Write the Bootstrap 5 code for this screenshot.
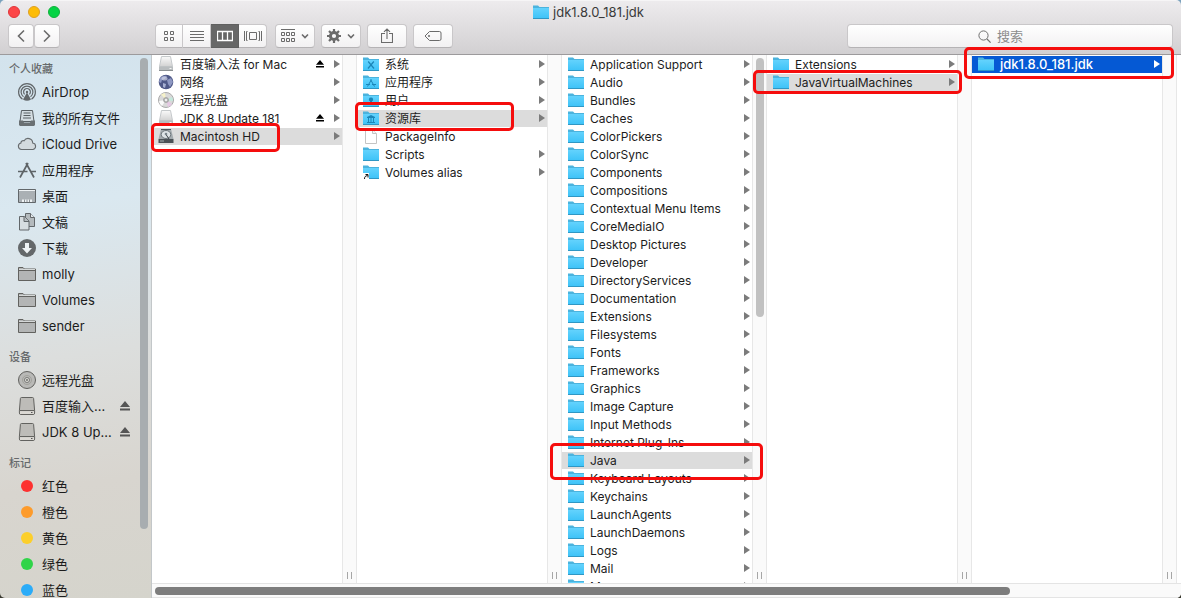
<!DOCTYPE html>
<html lang="zh-CN">
<head>
<meta charset="utf-8">
<meta name="viewport" content="width=device-width, initial-scale=1">
<title>jdk1.8.0_181.jdk</title>
<link href="https://cdn.jsdelivr.net/npm/bootstrap@5.3.0/dist/css/bootstrap.min.css" rel="stylesheet">
<style>
body{font-family:Inter,"Noto Sans CJK SC",sans-serif;font-size:13px;line-height:17px;color:#1c1c1c;background:linear-gradient(#7ba2bd,#5b6262 80%,#3a3a30)}
a{color:inherit;text-decoration:none}
.finder{border-radius:5px}
.chrome{background:linear-gradient(#edebed,#d2d0d2);border-bottom:1px solid #9c9a9c;border-top:1px solid #f6f5f6}
.titlerow{display:grid;grid-template-columns:1fr auto 1fr;height:22px;padding:0 12px 0 8px}
.light{width:12px;height:12px;border-radius:50%;border:1px solid #e0363a;background:#fc4648;padding:0}
.light.min{background:#fdbc05;border-color:#dfa023}
.light.max{background:#05d344;border-color:#10b13c}
.wtitle{color:#3a3a3a}
.tools{height:31px;padding:1px 8px 0 8px}
.tb{height:24px;border:1px solid #c9c7c9;border-bottom-color:#b5b3b5;border-radius:4px;background:linear-gradient(#fff,#f2f1f2);color:#6b6b6b;padding:0;display:flex;align-items:center;justify-content:center}
.tb.nav-b{width:26px}
.tb.wide{width:40px}
.views .tb{width:28px;border-radius:0;border-left-width:0}
.views .tb:first-child{border-left-width:1px;border-radius:4px 0 0 4px}
.views .tb:last-child{border-radius:0 4px 4px 0}
.views .tb.on{background:#676767;border-color:#606060;color:#fff}
.views{margin-left:95px}
.groupings{gap:6px}
.tb svg,.find svg{fill:none;stroke:currentColor}
.find{width:326px}
.find input{height:24px;width:100%;border:1px solid #c9c7c9;border-bottom-color:#b5b3b5;border-radius:4px;background:linear-gradient(#fff,#f2f1f2);text-align:center;outline:0;padding:0}
.find input::placeholder{color:#8c8c8c;opacity:1}
.find input::-webkit-search-cancel-button{display:none}
.find svg{position:absolute;left:calc(50% - 32px);top:6px;color:#6f6f6f}
.side{width:152px;flex:none;border-right:1px solid #c3c7c9;background:linear-gradient(172deg,#d3e3ed,#dae8f0 28%,#dcdedd 55%,#d8d5cf 78%,#d5d4cc);padding-top:4px}
.side h2{font-size:11px;line-height:20px;font-weight:500;color:#66696b;margin:0;padding-left:9px}
.side ul+h2{margin-top:8px}
.side a{display:flex;align-items:center;height:26px;padding-left:17px;gap:5px;width:136px}
.side a svg{width:20px;height:20px;flex:none}
.side a .ej{width:10px;height:10px;margin-left:auto;margin-right:6px;color:#555}
.dot{width:20px;display:flex;justify-content:center;flex:none}
.dot i{width:12px;height:12px;border-radius:50%}
.bar{position:absolute;width:8px;border-radius:4px}
.side .bar{left:140px;top:3px;height:471px;background:#a8adb0}
.pane{width:190px;flex:none;padding-top:1px;font-size:12px}
.pane li{height:18px;position:relative}
.pane a{display:flex;align-items:center;height:17px;padding:0 2px 0 6px;gap:6px;color:#1c1c1c}
.pane a>svg{width:16px;height:16px;flex:none;margin-bottom:1px}
.pane a>.ej{width:8px;height:8px;margin-left:auto;color:#000;margin-right:4px}
.pane a.dir::after{content:"";margin-left:auto;margin-bottom:1px;border-left:6px solid #7b7b7b;border-top:4px solid transparent;border-bottom:4px solid transparent}
.pane a.has-ej::after{margin-left:0}
.pane a.picked{background:#dcdcdc}
.pane a.active-pick{background:#0559d4;color:#fff;font-weight:500;font-size:13px}
.pane a.active-pick::after{border-left-color:#fff}
.gutter{width:15px;flex:none;background:#fafafa;border:solid #e7e7e7;border-width:0 1px;position:relative}
.grip{position:absolute;left:4px;bottom:4px;width:5px;height:7px;border:solid #a6a6a6;border-width:0 1px}
.gutter .bar{left:3px;top:3px;height:259px;background:#c1c1c1}
.callout{position:absolute;border:3px solid #f50d0d;border-radius:5px;z-index:5;pointer-events:none}
.c-disk{left:-1px;top:-5px;width:129px;height:29px}
.c-lib{left:-2px;top:-8px;width:159px;height:29px}
.c-java{left:-12px;top:-9px;width:213px;height:37px}
.c-jvm{left:-14px;top:-4px;width:209px;height:24px}
.c-jdk{left:-8px;top:-9px;width:210px;height:32px}
.hbar{height:15px;background:#fafafa;border:solid #e4e4e4;border-width:1px 0;position:relative;z-index:4;padding:3px}
.hbar div{width:83.6%;height:8px;border-radius:4px;background:#7d7d7d}
</style>
</head>
<body class="vh-100 overflow-hidden">
<svg width="0" height="0" class="position-absolute" aria-hidden="true">
<defs>
<linearGradient id="gf" x1="0" y1="0" x2="0" y2="1"><stop offset="0" stop-color="#63d2fd"/><stop offset="1" stop-color="#3fc3f8"/></linearGradient>
<linearGradient id="gd" x1="0" y1="0" x2="0" y2="1"><stop offset="0" stop-color="#fafafa"/><stop offset="1" stop-color="#d2d2d2"/></linearGradient>
</defs>
<symbol id="folder" viewBox="0 0 16 16"><path d="M0 1.500h5l1.500 1.500H16v11.500H0z" fill="#4bb3dd"/><path d="M0 4h16v10H0z" fill="url(#gf)"/><path d="M0 14h16v1H0z" fill="#2f97c4"/></symbol>
<symbol id="f-sys" viewBox="0 0 16 16"><use href="#folder"/><path d="M5.200 5.500 11 12.500M10.800 5.500 5 12.500" stroke="#1b86b8" stroke-width="1.200"/></symbol>
<symbol id="f-app" viewBox="0 0 16 16"><use href="#folder"/><path d="M4.500 12.500 8.500 5.500M7.500 5.500l4 7M3 10.500h4M9 10.500h4" stroke="#1b86b8" stroke-width="1"/></symbol>
<symbol id="f-user" viewBox="0 0 16 16"><use href="#folder"/><path d="M8 5.500a2 2 0 0 1 1 3.800L8.800 12.500H7.200L7 9.300a2 2 0 0 1 1-3.800z" fill="#1b86b8"/></symbol>
<symbol id="f-lib" viewBox="0 0 16 16"><use href="#folder"/><path d="M4 8V7l4-2 4 2v1zM4 12h8v1H4zM5 8h1v4H5zM7.500 8h1v4h-1zM10 8h1v4h-1z" fill="#1b86b8"/></symbol>
<symbol id="f-alias" viewBox="0 0 16 16"><use href="#folder"/><path d="M0 9h6v7H0z" fill="#fff"/><path d="M1.500 15c0-2 .5-3 3-3.500M2.500 10.500h2.500v3" stroke="#111" fill="none"/></symbol>
<symbol id="page" viewBox="0 0 16 16"><path d="M2.500 1.500h7l4 4v10h-11z" fill="#fff" stroke="#c4c4c4"/><path d="M9.500 1.500v4h4" fill="#f2f2f2" stroke="#c4c4c4"/></symbol>
<symbol id="disk" viewBox="0 0 16 16"><path d="M3.500.5h9L14.500 10.500h-13z" fill="url(#gd)" stroke="#c5c9cb"/><path d="M1 10.500h14V15H1z" fill="#b9bdbf"/><path d="M1 14.500h14" stroke="#8b9093"/><path d="M11.500 12.500h2" stroke="#f4f4f4"/></symbol>
<symbol id="hd" viewBox="0 0 16 16"><path d="M3 1h10l2.500 10H.5z" fill="#a3aaae"/><ellipse cx="8" cy="6.500" rx="4.800" ry="4" fill="#dde3e6" stroke="#6d767b"/><path d="M8 6.500 11 11" stroke="#394247"/><circle cx="8" cy="6" r="1.300" fill="#7b868c"/><path d="M.5 11h15v4H.5z" fill="#4b5257"/><path d="M3 1.500h10" stroke="#4e565b"/><path d="M2 13h4" stroke="#a7b0b5"/></symbol>
<symbol id="globe" viewBox="0 0 16 16"><circle cx="8" cy="8" r="7.300" fill="#4f5988"/><path d="M2 4q3-3 7-2l-2 3-3 1-1 3-2-1zM9 6l4-2 2 4-3 5-2-3z" fill="#8e98c2"/><path d="M5 9l3 1-1 4-2-1z" fill="#a8b1d3"/><ellipse cx="6.500" cy="4.500" rx="3" ry="2" fill="#d5d9ea" opacity=".65"/></symbol>
<symbol id="cd" viewBox="0 0 16 16"><circle cx="8" cy="8" r="7.500" fill="#d9d9d9" stroke="#a9a9a9"/><path d="M8 8 3 2.500A7 7 0 0 1 7 1z" fill="#f6f2c9"/><path d="M8 8 14 5a7 7 0 0 1 1 4z" fill="#c3e9dc"/><path d="M8 8l2 7a7 7 0 0 0 4-3z" fill="#e5c8e3"/><path d="M8 8 1 9a7 7 0 0 0 3 5z" fill="#fafafa"/><circle cx="8" cy="8" r="2.500" fill="#bbb" stroke="#8e8e8e" stroke-width=".6"/><circle cx="8" cy="8" r="1" fill="#fff"/></symbol>
<symbol id="eject" viewBox="0 0 10 10"><path d="M5 0 10 6H0zM0 7.500h10v2H0z" fill="currentColor"/></symbol>
<symbol id="s-air" viewBox="0 0 20 20"><g fill="none" stroke="#62676a" stroke-width="1.200"><path d="M5.500 17.200a8.400 8.400 0 1 1 9 0M6.500 14.700a5.900 5.900 0 1 1 7 0M7.600 12.300a3.400 3.400 0 1 1 4.800 0"/></g><path d="M10 10.500 14 17.500q-4 2.500-8 0z" fill="#62676a"/><circle cx="10" cy="10" r="1.200" fill="#62676a"/></symbol>
<symbol id="s-all" viewBox="0 0 20 20"><path d="M4.500 2.500h11l1.500 11H3z" fill="#d4dde2" stroke="#596064"/><path d="M6.500 5h7M6.500 7.500h7M6 10h8" stroke="#596064"/><path d="M2 12.500h4l1 2h6l1-2h4V17l-1 1H3l-1-1z" fill="#6a7073"/></symbol>
<symbol id="s-cloud" viewBox="0 0 20 20"><path d="M4.500 15.500a3.300 3.300 0 0 1-.6-6.500 2.300 2.300 0 0 1 3.200-2.200A4.600 4.600 0 0 1 15.700 9a3.300 3.300 0 0 1 .3 6.500z" fill="#d3dade" stroke="#676c6f" stroke-width="1.100"/></symbol>
<symbol id="s-app" viewBox="0 0 20 20"><g fill="none" stroke="#5e6467" stroke-width="1.700"><path d="M3 17.500 11 3M9 3l8 14.500M1 11.500h9.500M13 11.500h6"/></g></symbol>
<symbol id="s-desk" viewBox="0 0 20 20"><path d="M1.500 3.500h17v13h-17z" fill="#aab0b4" stroke="#62676a"/><path d="M2 4.500h16" stroke="#eef2f4"/><path d="M5 13.500h10V16H5z" fill="#eef2f4"/><path d="M7.500 13.500V16M10 13.500V16M12.500 13.500V16" stroke="#8d9397"/></symbol>
<symbol id="s-doc" viewBox="0 0 20 20"><path d="M8.500 1.500h5l4 4v9h-9z" fill="#b4babd" stroke="#62676a"/><path d="M13.500 1.500v4h4" fill="#e4eaed" stroke="#62676a"/><path d="M2.500 4.500h5l4.500 4.500v9H2.500z" fill="#d7dde0" stroke="#62676a"/><path d="M7 4.500v5h5" fill="#b4babd" stroke="#62676a"/></symbol>
<symbol id="s-down" viewBox="0 0 20 20"><circle cx="10" cy="10" r="9" fill="#64686a"/><path d="M8 5h4v5h3l-5 5.500L5 10h3z" fill="#eef2f4"/></symbol>
<symbol id="s-fold" viewBox="0 0 20 20"><path d="M1.500 16.500v-13H6l1.500 1.500h11v11.500z" fill="#b3b5b5" stroke="#62625f"/><path d="M2 6.500h16" stroke="#62625f"/><path d="M2 5.500h16" stroke="#d5d8d8"/></symbol>
<symbol id="s-cd" viewBox="0 0 20 20"><circle cx="10" cy="10" r="8.500" fill="#b9b9b7" stroke="#62625f"/><circle cx="10" cy="10" r="4.500" fill="none" stroke="#a2a29c"/><circle cx="10" cy="10" r="2.500" fill="#deded9" stroke="#62625f" stroke-width=".8"/><circle cx="10" cy="10" r=".9" fill="#62625f"/></symbol>
<symbol id="s-disk" viewBox="0 0 20 20"><path d="M4.500 1.500h11q1 0 1.100 1l1 12v2.500q0 1.500-1.500 1.500H3.900q-1.500 0-1.500-1.500V14.500l1-12q.1-1 1.100-1z" fill="#bdbcb8" stroke="#62625f"/><path d="M2.500 14.500h15" stroke="#62625f"/><path d="M3 15.200h14V18H3z" fill="#dbd9d4"/><path d="M14 16.500h1.500" stroke="#555"/></symbol>
</svg>

<div class="finder d-flex flex-column h-100 overflow-hidden">
<header class="chrome flex-shrink-0">
  <div class="titlerow align-items-center">
    <div class="d-flex gap-2"><button class="light" aria-label="关闭"></button><button class="light min" aria-label="最小化"></button><button class="light max" aria-label="缩放"></button></div>
    <div class="wtitle d-flex align-items-center gap-1"><svg width="16" height="16"><use href="#folder"/></svg><span>jdk1.8.0_181.jdk</span></div>
  </div>
  <div class="tools d-flex align-items-start">
    <button class="tb nav-b" aria-label="后退"><svg width="10" height="14"><path d="M8 1.500 2.500 7 8 12.500" stroke-width="1.600"/></svg></button>
    <button class="tb nav-b" aria-label="前进"><svg width="10" height="14"><path d="M2 1.500 7.500 7 2 12.500" stroke-width="1.600"/></svg></button>
    <div class="views d-flex" role="group" aria-label="显示">
      <button class="tb" aria-label="图标"><svg width="12" height="12"><path d="M1.500 1.500h3v3h-3zM7.500 1.500h3v3h-3zM1.500 7.500h3v3h-3zM7.500 7.500h3v3h-3z"/></svg></button>
      <button class="tb" aria-label="列表"><svg width="14" height="12"><path d="M0 1.500h14M0 4.500h14M0 7.500h14M0 10.500h14"/></svg></button>
      <button class="tb on" aria-label="分栏"><svg width="16" height="12"><path d="M.5 1.500h15v9H.5zM5.500 1.500v9M10.500 1.500v9" stroke-width="1.300"/></svg></button>
      <button class="tb" aria-label="封面流"><svg width="18" height="12"><path d="M.5 1v10M2.500 1.500h1M2.500 1.500v9h1M5.500 2.500h7v7h-7zM14.500 1.500h1v9h-1M17.500 1v10"/></svg></button>
    </div>
    <div class="d-flex ms-2 groupings">
      <button class="tb wide" aria-label="排列"><svg width="28" height="14"><path d="M0 .5h14M.5 3.500h3v3h-3zM5.500 3.500h3v3h-3zM10.500 3.500h3v3h-3zM.5 9.500h3v3h-3zM5.500 9.500h3v3h-3zM10.500 9.500h3v3h-3z"/><path d="M21 5.500l3 3 3-3" stroke-width="1.600"/></svg></button>
      <button class="tb wide" aria-label="操作"><svg width="28" height="14"><circle cx="7" cy="7" r="3.600" stroke-width="3"/><path d="M7 0v3M7 11v3M0 7h3M11 7h3M2 2l2 2M10 10l2 2M12 2l-2 2M4 10l-2 2" stroke-width="2.200"/><path d="M21 5.500l3 3 3-3" stroke-width="1.600"/></svg></button>
      <button class="tb wide" aria-label="共享"><svg width="12" height="16"><path d="M4 5.500H.5v9h11v-9H8M6 11V1M3 3.800 6 1l3 2.800" stroke-width="1.100"/></svg></button>
      <button class="tb wide" aria-label="标签"><svg width="18" height="12"><path d="M5.500 1.500h10q1.500 0 1.500 1.500v6q0 1.500-1.500 1.500h-10L1 6z"/><circle cx="5" cy="6" r=".7"/></svg></button>
    </div>
    <div class="find ms-auto position-relative"><svg width="13" height="13"><circle cx="5.500" cy="5.500" r="4.600"/><path d="M9 9l3.600 3.600" stroke-width="1.200"/></svg><input type="search" placeholder="搜索" aria-label="搜索"></div>
  </div>
</header>

<div class="d-flex flex-grow-1" style="min-height:0">
<nav class="side position-relative" aria-label="边栏">
  <h2>个人收藏</h2>
  <ul class="list-unstyled mb-0">
    <li><a href="#"><svg><use href="#s-air"/></svg>AirDrop</a></li>
    <li><a href="#"><svg><use href="#s-all"/></svg>我的所有文件</a></li>
    <li><a href="#"><svg><use href="#s-cloud"/></svg>iCloud Drive</a></li>
    <li><a href="#"><svg><use href="#s-app"/></svg>应用程序</a></li>
    <li><a href="#"><svg><use href="#s-desk"/></svg>桌面</a></li>
    <li><a href="#"><svg><use href="#s-doc"/></svg>文稿</a></li>
    <li><a href="#"><svg><use href="#s-down"/></svg>下载</a></li>
    <li><a href="#"><svg><use href="#s-fold"/></svg>molly</a></li>
    <li><a href="#"><svg><use href="#s-fold"/></svg>Volumes</a></li>
    <li><a href="#"><svg><use href="#s-fold"/></svg>sender</a></li>
  </ul>
  <h2>设备</h2>
  <ul class="list-unstyled mb-0">
    <li><a href="#"><svg><use href="#s-cd"/></svg>远程光盘</a></li>
    <li><a href="#"><svg><use href="#s-disk"/></svg>百度输入…<svg class="ej"><use href="#eject"/></svg></a></li>
    <li><a href="#"><svg><use href="#s-disk"/></svg>JDK 8 Up…<svg class="ej"><use href="#eject"/></svg></a></li>
  </ul>
  <h2>标记</h2>
  <ul class="list-unstyled mb-0">
    <li><a href="#"><span class="dot"><i style="background:#fd3130"></i></span>红色</a></li>
    <li><a href="#"><span class="dot"><i style="background:#fd9b2b"></i></span>橙色</a></li>
    <li><a href="#"><span class="dot"><i style="background:#fccf2b"></i></span>黄色</a></li>
    <li><a href="#"><span class="dot"><i style="background:#30d449"></i></span>绿色</a></li>
    <li><a href="#"><span class="dot"><i style="background:#2bacf8"></i></span>蓝色</a></li>
  </ul>
  <div class="bar"></div>
</nav>

<main class="d-flex flex-column flex-grow-1 bg-white" style="min-width:0">
<div class="d-flex flex-grow-1" style="min-height:0">
  <ul class="pane list-unstyled mb-0">
    <li><a class="dir has-ej" href="#"><svg><use href="#disk"/></svg>百度输入法 for Mac<svg class="ej"><use href="#eject"/></svg></a></li>
    <li><a class="dir" href="#"><svg><use href="#globe"/></svg>网络</a></li>
    <li><a class="dir" href="#"><svg><use href="#cd"/></svg>远程光盘</a></li>
    <li><a class="dir has-ej" href="#"><svg><use href="#disk"/></svg>JDK 8 Update 181<svg class="ej"><use href="#eject"/></svg></a></li>
    <li><a class="dir picked" href="#"><svg><use href="#hd"/></svg>Macintosh HD</a><div class="callout c-disk"></div></li>
  </ul>
  <div class="gutter"><div class="grip"></div></div>
  <ul class="pane list-unstyled mb-0">
    <li><a class="dir" href="#"><svg><use href="#f-sys"/></svg>系统</a></li>
    <li><a class="dir" href="#"><svg><use href="#f-app"/></svg>应用程序</a></li>
    <li><a class="dir" href="#"><svg><use href="#f-user"/></svg>用户</a></li>
    <li><a class="dir picked" href="#"><svg><use href="#f-lib"/></svg>资源库</a><div class="callout c-lib"></div></li>
    <li><a href="#"><svg><use href="#page"/></svg>PackageInfo</a></li>
    <li><a class="dir" href="#"><svg><use href="#folder"/></svg>Scripts</a></li>
    <li><a class="dir" href="#"><svg><use href="#f-alias"/></svg>Volumes alias</a></li>
  </ul>
  <div class="gutter"><div class="grip"></div></div>
  <ul class="pane list-unstyled mb-0">
    <li><a class="dir" href="#"><svg><use href="#folder"/></svg>Application Support</a></li>
    <li><a class="dir" href="#"><svg><use href="#folder"/></svg>Audio</a></li>
    <li><a class="dir" href="#"><svg><use href="#folder"/></svg>Bundles</a></li>
    <li><a class="dir" href="#"><svg><use href="#folder"/></svg>Caches</a></li>
    <li><a class="dir" href="#"><svg><use href="#folder"/></svg>ColorPickers</a></li>
    <li><a class="dir" href="#"><svg><use href="#folder"/></svg>ColorSync</a></li>
    <li><a class="dir" href="#"><svg><use href="#folder"/></svg>Components</a></li>
    <li><a class="dir" href="#"><svg><use href="#folder"/></svg>Compositions</a></li>
    <li><a class="dir" href="#"><svg><use href="#folder"/></svg>Contextual Menu Items</a></li>
    <li><a class="dir" href="#"><svg><use href="#folder"/></svg>CoreMediaIO</a></li>
    <li><a class="dir" href="#"><svg><use href="#folder"/></svg>Desktop Pictures</a></li>
    <li><a class="dir" href="#"><svg><use href="#folder"/></svg>Developer</a></li>
    <li><a class="dir" href="#"><svg><use href="#folder"/></svg>DirectoryServices</a></li>
    <li><a class="dir" href="#"><svg><use href="#folder"/></svg>Documentation</a></li>
    <li><a class="dir" href="#"><svg><use href="#folder"/></svg>Extensions</a></li>
    <li><a class="dir" href="#"><svg><use href="#folder"/></svg>Filesystems</a></li>
    <li><a class="dir" href="#"><svg><use href="#folder"/></svg>Fonts</a></li>
    <li><a class="dir" href="#"><svg><use href="#folder"/></svg>Frameworks</a></li>
    <li><a class="dir" href="#"><svg><use href="#folder"/></svg>Graphics</a></li>
    <li><a class="dir" href="#"><svg><use href="#folder"/></svg>Image Capture</a></li>
    <li><a class="dir" href="#"><svg><use href="#folder"/></svg>Input Methods</a></li>
    <li><a class="dir" href="#"><svg><use href="#folder"/></svg>Internet Plug-Ins</a></li>
    <li><a class="dir picked" href="#"><svg><use href="#folder"/></svg>Java</a><div class="callout c-java"></div></li>
    <li><a class="dir" href="#"><svg><use href="#folder"/></svg>Keyboard Layouts</a></li>
    <li><a class="dir" href="#"><svg><use href="#folder"/></svg>Keychains</a></li>
    <li><a class="dir" href="#"><svg><use href="#folder"/></svg>LaunchAgents</a></li>
    <li><a class="dir" href="#"><svg><use href="#folder"/></svg>LaunchDaemons</a></li>
    <li><a class="dir" href="#"><svg><use href="#folder"/></svg>Logs</a></li>
    <li><a class="dir" href="#"><svg><use href="#folder"/></svg>Mail</a></li>
    <li><a class="dir" href="#"><svg><use href="#folder"/></svg>Messages</a></li>
  </ul>
  <div class="gutter"><div class="bar"></div><div class="grip"></div></div>
  <ul class="pane list-unstyled mb-0">
    <li><a class="dir" href="#"><svg><use href="#folder"/></svg>Extensions</a></li>
    <li><a class="dir picked" href="#"><svg><use href="#folder"/></svg>JavaVirtualMachines</a><div class="callout c-jvm"></div></li>
  </ul>
  <div class="gutter"><div class="grip"></div></div>
  <ul class="pane list-unstyled mb-0">
    <li><a class="dir active-pick" href="#"><svg><use href="#folder"/></svg>jdk1.8.0_181.jdk</a><div class="callout c-jdk"></div></li>
  </ul>
  <div class="gutter"><div class="grip"></div></div>
</div>
<div class="hbar"><div></div></div>
</main>
</div>
</div>
<script src="https://cdn.jsdelivr.net/npm/bootstrap@5.3.0/dist/js/bootstrap.bundle.min.js"></script>
</body>
</html>
